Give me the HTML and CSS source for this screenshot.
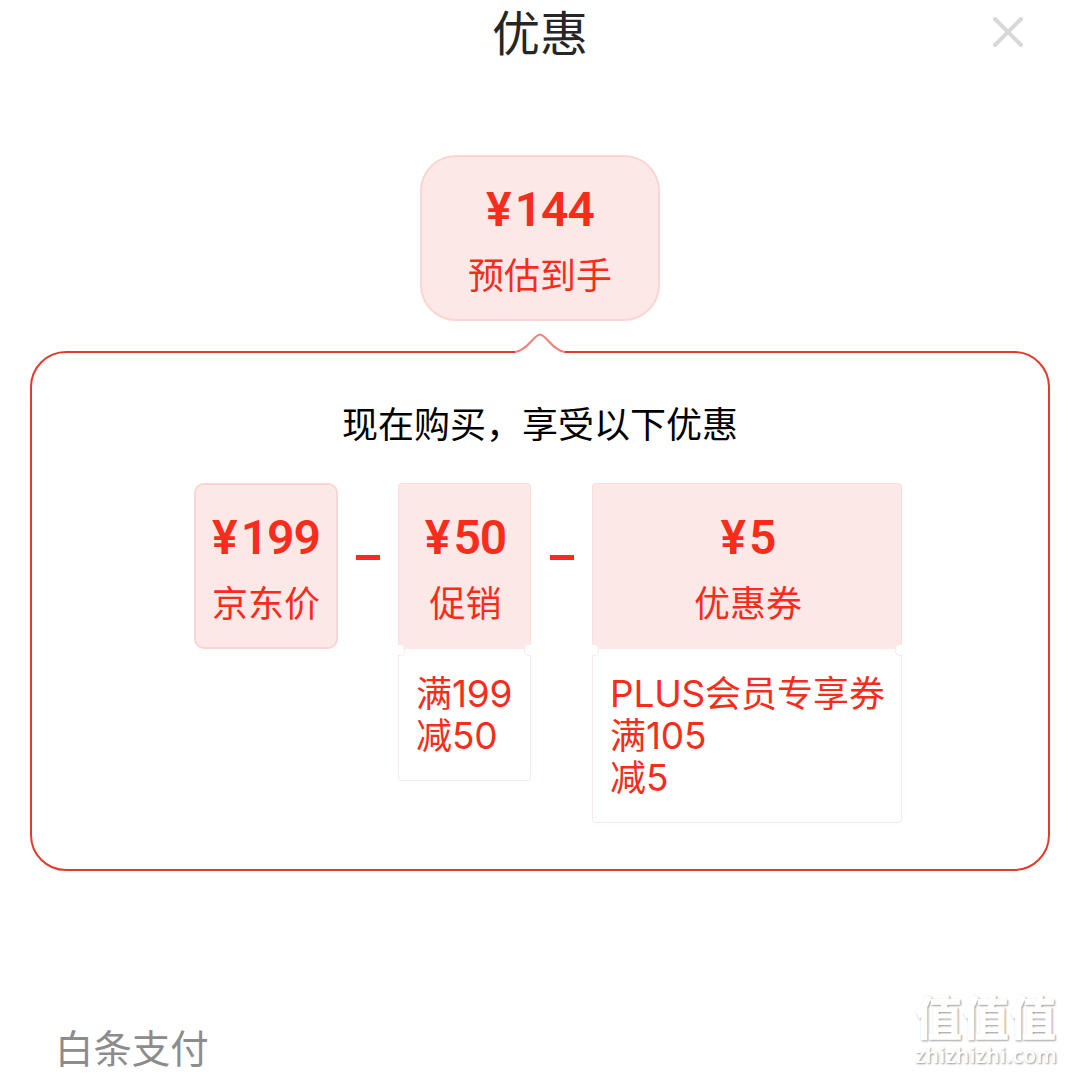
FILE: index.html
```html
<!DOCTYPE html>
<html lang="zh-CN">
<head>
    <meta charset="UTF-8">
    <meta name="viewport" content="width=device-width, initial-scale=1.0">
    <title>优惠</title>
    <link rel="stylesheet" href="styles.css">
</head>
<body>
    <div class="page">
        <header class="header">
            <h1>优惠</h1>
            <svg class="close" viewBox="0 0 32 32" width="32" height="32">
                <path d="M3 3L29 29M29 3L3 29" stroke="#d8d8d8" stroke-width="4" stroke-linecap="round"/>
            </svg>
        </header>

        <div class="card total">
            <div class="price"><span class="yen">¥</span>144</div>
            <div class="label">预估到手</div>
        </div>

        <section class="panel">
            <svg class="arrow" viewBox="0 0 52 22" width="52" height="22">
                <path class="arrow-fill" d="M2 22V18C14 17 20 2 26 2C32 2 38 17 50 18V22Z"/>
                <path class="arrow-line" d="M1 19C13 18 20 1.5 26 1.5C32 1.5 39 18 51 19"/>
            </svg>
            <h2>现在购买，享受以下优惠</h2>

            <div class="formula">
                <div class="card base">
                    <div class="price"><span class="yen">¥</span>199</div>
                    <div class="label">京东价</div>
                </div>
                <div class="minus"></div>
                <div class="ticket promo">
                    <div class="ticket-top">
                        <div class="price"><span class="yen">¥</span>50</div>
                        <div class="label">促销</div>
                    </div>
                    <div class="ticket-detail">
                        <p>满<span class="num">199</span></p>
                        <p>减<span class="num">50</span></p>
                    </div>
                </div>
                <div class="minus"></div>
                <div class="ticket coupon">
                    <div class="ticket-top">
                        <div class="price"><span class="yen">¥</span>5</div>
                        <div class="label">优惠券</div>
                    </div>
                    <div class="ticket-detail">
                        <p><span class="num">PLUS</span>会员专享券</p>
                        <p>满<span class="num">105</span></p>
                        <p>减<span class="num">5</span></p>
                    </div>
                </div>
            </div>
        </section>

        <div class="payment">白条支付</div>

        <div class="watermark">
            <div class="watermark-name">值值值</div>
            <div class="watermark-site">zhizhizhi.com</div>
        </div>
    </div>
</body>
</html>
```
FILE: styles.css
```css
* {
    box-sizing: border-box;
}
html {
    overflow: hidden;
}
body {
    margin: 0;
    overflow: hidden;
    background-color: #fff;
    font-family: "Noto Sans CJK SC", sans-serif;
    color: #f72c1b;
}
h1, h2, p {
    margin: 0;
    font-weight: 400;
}
.page {
    position: relative;
    width: 1080px;
    height: 1074px;
    overflow: hidden;
}
.header {
    display: grid;
    grid-template-columns: 1fr auto 1fr;
    align-items: center;
    height: 64px;
    padding-right: 56px;
    padding-left: 56px;
}
.header h1 {
    grid-column: 2;
    font-size: 48px;
    line-height: 60px;
    margin-bottom: 4px;
    color: #262626;
}
.close {
    justify-self: end;
    fill: none;
}

/* price blocks */
.card {
    height: 166px;
    padding-top: 25px;
    border: 2px solid #fbd5d3;
    border-radius: 10px;
    background-color: #fde8e8;
    text-align: center;
}
.total {
    width: 240px;
    margin: 91px auto 0;
    border-radius: 36px;
}
.price {
    font-family: Roboto, sans-serif;
    font-size: 48px;
    font-weight: 600;
    line-height: 56px;
    letter-spacing: -1px;
}
.yen {
    margin-right: 4px;
}
.label {
    margin-top: 10px;
    font-size: 36px;
    line-height: 50px;
}

/* outlined box with the breakdown */
.panel {
    position: relative;
    width: 1020px;
    height: 520px;
    margin: 30px auto 0;
    padding-top: 44px;
    border: 2px solid #e23a2c;
    border-radius: 36px;
}
.arrow {
    position: absolute;
    top: -20px;
    left: 482px;
}
.arrow-fill {
    fill: #fff;
}
.arrow-line {
    fill: none;
    stroke: #f08078;
    stroke-width: 2;
}
.panel h2 {
    font-size: 36px;
    line-height: 50px;
    color: #000;
    text-align: center;
}
.formula {
    display: flex;
    align-items: flex-start;
    margin-top: 36px;
    padding-left: 162px;
}
.base {
    width: 144px;
}
.minus {
    width: 24px;
    height: 5px;
    margin: 72px 18px 0;
    background-color: #f72c1b;
}
.promo + .minus {
    margin-left: 19px;
}

/* tickets */
.promo {
    width: 133px;
}
.coupon {
    width: 310px;
}
.ticket-top {
    height: 166px;
    padding-top: 26px;
    padding-left: 2px;
    border: 1px solid #fcdedd;
    border-bottom: none;
    border-radius: 4px 4px 0 0;
    background-color: #fde8e8;
    text-align: center;
}
.ticket-detail {
    position: relative;
    padding: 21px 0 26px 17px;
    border: 1px solid #fde8e8;
    border-top: none;
    border-radius: 0 0 4px 4px;
    font-size: 36px;
    line-height: 42px;
    white-space: nowrap;
}
.ticket-detail p {
    height: 42px;
}
/* notches on the tear line */
.ticket-detail::before,
.ticket-detail::after {
    content: "";
    position: absolute;
    top: -5px;
    width: 6px;
    height: 10px;
    border: 1px solid #fde8e8;
    background-color: #fff;
}
.ticket-detail::before {
    left: -1px;
    border-left: none;
    border-radius: 0 5px 5px 0;
}
.ticket-detail::after {
    right: -1px;
    border-right: none;
    border-radius: 5px 0 0 5px;
}
.num {
    font-family: Inter, sans-serif;
    font-size: 37px;
    letter-spacing: -0.2px;
}

.payment {
    margin-top: 147px;
    padding-left: 55px;
    font-size: 38.4px;
    line-height: 56px;
    color: #8c8c8c;
}
.watermark {
    position: absolute;
    top: 988px;
    left: 915px;
    color: #fff;
    text-shadow: 1px 1px 2px #999;
}
.watermark-name {
    font-size: 47px;
    font-weight: 900;
    line-height: 54px;
}
.watermark-site {
    font-family: "Noto Sans", sans-serif;
    font-size: 21px;
    font-weight: 600;
    line-height: 26px;
    letter-spacing: 0.3px;
}
```
